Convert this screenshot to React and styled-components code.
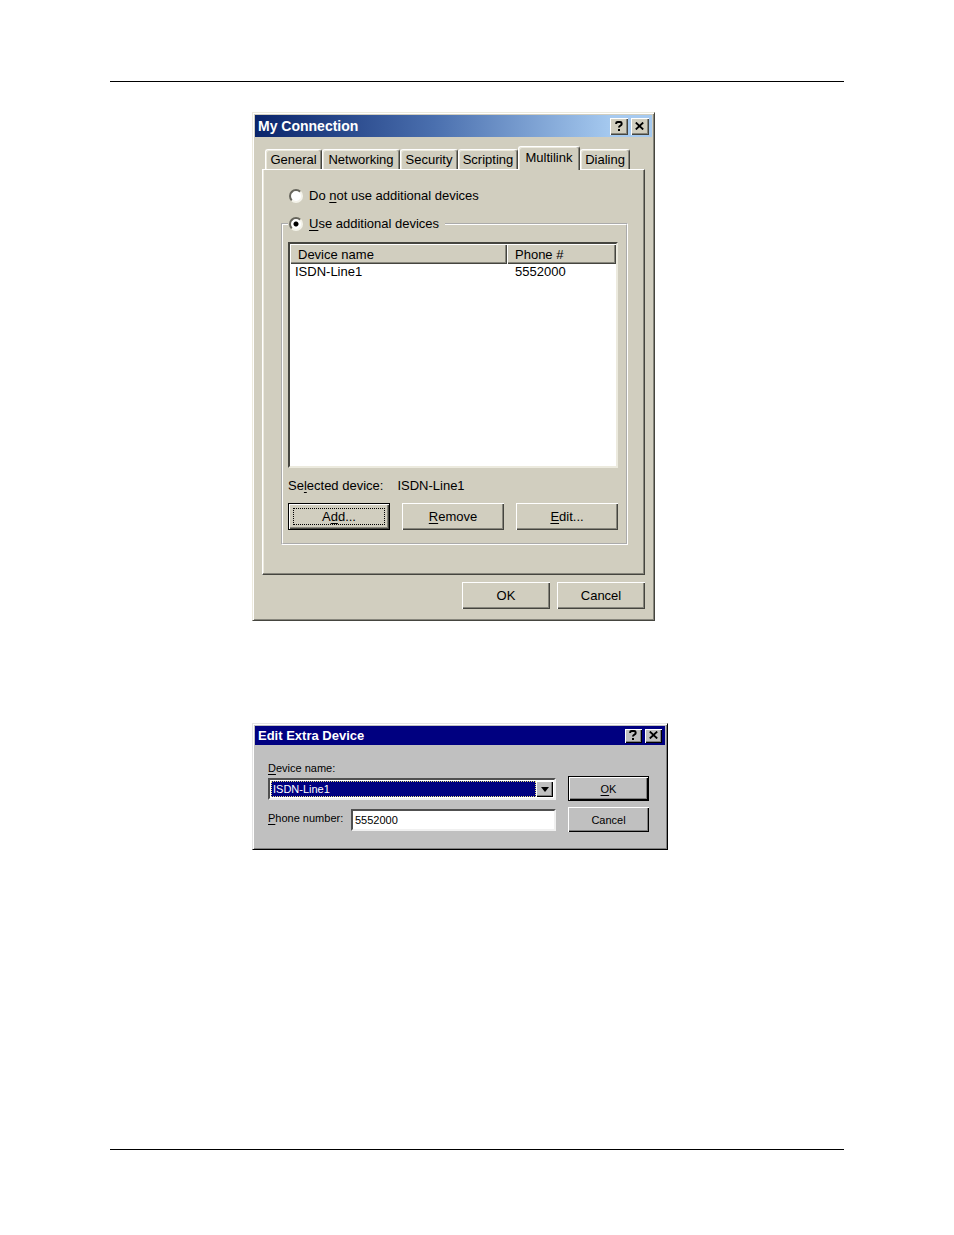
import { useState } from "react";
import styled, { createGlobalStyle, ThemeProvider } from "styled-components";

const connectionTheme = {
  face: "#d1cebf",
  light: "#eceade",
  shadow: "#87867c",
  dark: "#45453f",
  caption: "linear-gradient(90deg, #0a246a 0%, #4a6fae 45%, #a6caf0 90%)",
  captionHeight: "22px",
  captionSize: "14px",
  captionButton: "18px",
  captionButtonHeight: "17px",
  fontSize: "13px",
};

const deviceTheme = {
  face: "#c0c0c0",
  light: "#e4e4e4",
  shadow: "#808080",
  dark: "#000000",
  caption: "#000080",
  captionHeight: "19px",
  captionSize: "13px",
  captionButton: "17px",
  captionButtonHeight: "14px",
  fontSize: "11px",
};

const tabs = [
  "General",
  "Networking",
  "Security",
  "Scripting",
  "Multilink",
  "Dialing",
];

const TitleBar = ({ children }) => (
  <Caption>
    <CaptionText>{children}</CaptionText>
    <CaptionButton type="button" aria-label="Help">
      <svg width="8" height="10" viewBox="0 0 8 10" aria-hidden="true">
        <path
          d="M1.2 3V2.2Q1.2 1 2.6 1H5.2Q6.6 1 6.6 2.2V3.2Q6.6 4 5.4 4.6Q4 5.2 4 6.5"
          fill="none"
          stroke="#000"
          strokeWidth="2"
        />
        <path d="M3 8h2v2H3z" />
      </svg>
    </CaptionButton>
    <CaptionButton type="button" aria-label="Close">
      <svg width="9" height="8" viewBox="0 0 9 8" aria-hidden="true">
        <path d="M0.8 0.5L8.2 7.5M8.2 0.5L0.8 7.5" stroke="#000" strokeWidth="1.8" />
      </svg>
    </CaptionButton>
  </Caption>
);

const ConnectionDialog = () => {
  const [tab, setTab] = useState("Multilink");
  const [mode, setMode] = useState("use");
  return (
    <ThemeProvider theme={connectionTheme}>
      <Dialog $width="403px" aria-label="My Connection">
        <TitleBar>My Connection</TitleBar>
        <ConnectionBody>
          <TabList role="tablist">
            {tabs.map((name) => (
              <Tab
                key={name}
                type="button"
                role="tab"
                aria-selected={name === tab}
                $active={name === tab}
                onClick={() => setTab(name)}
              >
                {name}
              </Tab>
            ))}
          </TabList>
          <Panel role="tabpanel">
            <FirstOption>
              <Radio
                type="radio"
                name="mode"
                checked={mode === "none"}
                onChange={() => setMode("none")}
              />
              <span>
                Do <u>n</u>ot use additional devices
              </span>
            </FirstOption>
            <Group>
              <Legend>
                <Option>
                  <Radio
                    type="radio"
                    name="mode"
                    checked={mode === "use"}
                    onChange={() => setMode("use")}
                  />
                  <span>
                    <u>U</u>se additional devices
                  </span>
                </Option>
              </Legend>
              <ListBox>
                <DeviceTable>
                  <thead>
                    <tr>
                      <HeadCell $wide>Device name</HeadCell>
                      <HeadCell>Phone #</HeadCell>
                    </tr>
                  </thead>
                  <tbody>
                    <tr>
                      <Cell $first>ISDN-Line1</Cell>
                      <Cell>5552000</Cell>
                    </tr>
                  </tbody>
                </DeviceTable>
              </ListBox>
              <Selected>
                <span>
                  Se<u>l</u>ected device:
                </span>
                <span>ISDN-Line1</span>
              </Selected>
              <GroupButtons>
                <DefaultButton type="button">
                  <Focus>
                    A<u>d</u>d...
                  </Focus>
                </DefaultButton>
                <Button type="button">
                  <u>R</u>emove
                </Button>
                <Button type="button">
                  <u>E</u>dit...
                </Button>
              </GroupButtons>
            </Group>
          </Panel>
          <Footer>
            <Button type="button">OK</Button>
            <Button type="button">Cancel</Button>
          </Footer>
        </ConnectionBody>
      </Dialog>
    </ThemeProvider>
  );
};

const DeviceDialog = () => {
  const [phone, setPhone] = useState("5552000");
  return (
    <ThemeProvider theme={deviceTheme}>
      <Dialog $width="416px" aria-label="Edit Extra Device">
        <TitleBar>Edit Extra Device</TitleBar>
        <DeviceBody>
          <Fields>
            <Label htmlFor="device">
              <u>D</u>evice name:
            </Label>
            <Field>
              <Select id="device">
                <option>ISDN-Line1</option>
              </Select>
              <Arrow aria-hidden="true">
                <svg width="8" height="5" viewBox="0 0 8 5">
                  <path d="M0 0h8L4 5z" />
                </svg>
              </Arrow>
            </Field>
            <PhoneRow>
              <Label htmlFor="phone">
                <u>P</u>hone number:
              </Label>
              <Field>
                <Input
                  id="phone"
                  type="text"
                  value={phone}
                  onChange={(e) => setPhone(e.target.value)}
                />
              </Field>
            </PhoneRow>
          </Fields>
          <Actions>
            <DefaultButton type="button">
              <span>
                <u>O</u>K
              </span>
            </DefaultButton>
            <Button type="button">Cancel</Button>
          </Actions>
        </DeviceBody>
      </Dialog>
    </ThemeProvider>
  );
};

const App = () => {
  return (
    <Page>
      <GlobalStyle />
      <Rule />
      <Main>
        <ConnectionDialog />
        <DeviceDialog />
      </Main>
      <Rule />
    </Page>
  );
};

export default App;

const GlobalStyle = createGlobalStyle`
  * {
    box-sizing: border-box;
  }
  body {
    margin: 0;
    background: #fff;
    color: #000;
    font-family: "Liberation Sans", Arial, sans-serif;
  }
  button, input, select {
    font: inherit;
    color: inherit;
    margin: 0;
  }
  u {
    text-underline-offset: 2px;
    text-decoration-thickness: 1px;
    text-decoration-skip-ink: none;
  }
`;

const Page = styled.div`
  display: flex;
  flex-direction: column;
  min-height: 100vh;
  padding: 81px 110px 85px;
`;

const Rule = styled.hr`
  width: 100%;
  height: 1px;
  margin: 0;
  border: 0;
  background: #000;
`;

const Main = styled.main`
  display: flex;
  flex: 1;
  flex-direction: column;
  align-items: flex-start;
  gap: 102px;
  padding: 30px 0 30px 142px;
`;

const Dialog = styled.section`
  width: 100%;
  max-width: ${(props) => props.$width};
  padding: 2px;
  border: 1px solid;
  border-color: ${({ theme }) =>
    `${theme.light} ${theme.dark} ${theme.dark} ${theme.light}`};
  background: ${({ theme }) => theme.face};
  box-shadow: inset 1px 1px #fff, inset -1px -1px ${({ theme }) => theme.shadow};
  font-size: ${({ theme }) => theme.fontSize};
  line-height: 16px;
`;

const Caption = styled.header`
  display: flex;
  align-items: center;
  gap: 3px;
  height: ${({ theme }) => theme.captionHeight};
  padding: 0 3px;
  background: ${({ theme }) => theme.caption};
`;

const CaptionText = styled.h1`
  flex: 1;
  margin: 0;
  color: #fff;
  font-size: ${({ theme }) => theme.captionSize};
  font-weight: bold;
`;

const raised = ({ theme }) =>
  `inset 1px 1px #fff, inset -1px -1px ${theme.dark}, inset -2px -2px ${theme.shadow}`;

const CaptionButton = styled.button`
  display: flex;
  align-items: center;
  justify-content: center;
  width: ${({ theme }) => theme.captionButton};
  height: ${({ theme }) => theme.captionButtonHeight};
  padding: 0 1px 1px 0;
  border: 0;
  background: ${({ theme }) => theme.face};
  box-shadow: ${raised};
`;

const ConnectionBody = styled.div`
  padding: 9px 7px;
`;

const TabList = styled.div`
  display: grid;
  grid-template-columns: 57px 78px 58px 60px 62px 50px;
  align-items: end;
  height: 23px;
  padding-left: 3px;
`;

const Tab = styled.button`
  z-index: ${(props) => (props.$active ? 1 : 0)};
  height: ${(props) => (props.$active ? "24px" : "20px")};
  margin-bottom: ${(props) => (props.$active ? "-1px" : "0")};
  padding: 1px 0 ${(props) => (props.$active ? "3px" : "0")};
  border: solid;
  border-width: 1px 1px 0;
  border-color: #fff ${({ theme }) => theme.dark} #fff #fff;
  border-radius: 3px 3px 0 0;
  background: ${({ theme }) => theme.face};
  box-shadow: inset -1px 0 ${({ theme }) => theme.shadow},
    inset 1px 1px ${({ theme }) => theme.light};
  line-height: 16px;
  text-align: center;
  white-space: nowrap;
`;

const Panel = styled.div`
  padding: 18px 16px 29px 18px;
  border: 1px solid;
  border-color: #fff ${({ theme }) => `${theme.dark} ${theme.dark}`} #fff;
  box-shadow: inset -1px -1px ${({ theme }) => theme.shadow},
    inset 1px 0 ${({ theme }) => theme.light};
`;

const Option = styled.label`
  display: flex;
  align-items: center;
  gap: 6px;
  height: 16px;
`;

const FirstOption = styled(Option)`
  margin: 0 0 12px 8px;
`;

const Radio = styled.input`
  appearance: none;
  width: 14px;
  height: 14px;
  border: 2px solid;
  border-color: #66655c #f4f3ea #f4f3ea #66655c;
  border-radius: 50%;
  background: #fff;

  &:checked {
    background: radial-gradient(circle, #000 2px, #fff 3px);
  }
`;

const Group = styled.fieldset`
  min-width: 0;
  margin: 0;
  padding: 10px 8px 13px 5px;
  border: 2px groove #fff;
`;

const Legend = styled.legend`
  padding: 0 6px 0 1px;
`;

const ListBox = styled.div`
  height: 226px;
  border: 2px solid;
  border-color: ${({ theme }) => theme.dark} ${({ theme }) => theme.light}
    ${({ theme }) => theme.light} ${({ theme }) => theme.dark};
  background: #fff;
`;

const DeviceTable = styled.table`
  width: 100%;
  border-collapse: separate;
  border-spacing: 0;
`;

const HeadCell = styled.th`
  width: ${(props) => (props.$wide ? "217px" : "auto")};
  height: 20px;
  padding: 1px 8px 0;
  background: ${({ theme }) => theme.face};
  box-shadow: ${raised};
  font-weight: normal;
  text-align: left;
`;

const Cell = styled.td`
  height: 16px;
  padding: 0 ${(props) => (props.$first ? "5px" : "8px")};
`;

const Selected = styled.div`
  display: flex;
  gap: 14px;
  padding: 10px 0 9px;
`;

const Button = styled.button`
  padding: 0;
  border: 0;
  background: ${({ theme }) => theme.face};
  box-shadow: ${raised};
  text-align: center;
`;

const DefaultButton = styled(Button)`
  padding: 4px;
  border: 1px solid #000;
`;

const Focus = styled.span`
  display: flex;
  align-items: center;
  justify-content: center;
  height: 100%;
  border: 1px dotted #000;
  white-space: pre;
`;

const GroupButtons = styled.div`
  display: grid;
  grid-template-columns: repeat(3, 102px);
  grid-auto-rows: 27px;
  justify-content: space-between;
`;

const Footer = styled.footer`
  display: grid;
  grid-template-columns: repeat(2, 88px);
  grid-auto-rows: 27px;
  justify-content: end;
  gap: 7px;
  padding-top: 7px;
`;

const DeviceBody = styled.div`
  display: flex;
  gap: 12px;
  padding: 15px 16px 15px 13px;
`;

const Fields = styled.div`
  display: flex;
  flex: 1;
  flex-direction: column;
  gap: 2px;
`;

const Label = styled.label`
  white-space: nowrap;
`;

const Field = styled.div`
  display: flex;
  height: 22px;
  padding: 1px;
  border: 2px solid;
  border-color: #505050 #f0f0f0 #f0f0f0 #505050;
  background: #fff;
`;

const Select = styled.select`
  appearance: none;
  flex: 1;
  padding: 0 1px;
  border: 1px dotted #e8e080;
  border-radius: 0;
  background: #000080;
  color: #fff;
  line-height: 14px;
`;

const Arrow = styled.span`
  display: flex;
  align-items: center;
  justify-content: center;
  width: 17px;
  background: ${({ theme }) => theme.face};
  box-shadow: ${raised};
`;

const PhoneRow = styled.div`
  display: grid;
  grid-template-columns: 83px 1fr;
  margin-top: 7px;
  line-height: 18px;
`;

const Input = styled.input`
  width: 100%;
  padding: 0 1px;
  border: 0;
  outline: 0;
  background: transparent;
`;

const Actions = styled.div`
  display: grid;
  grid-template-columns: 81px;
  grid-auto-rows: 25px;
  gap: 6px;
  padding-top: 16px;
`;
